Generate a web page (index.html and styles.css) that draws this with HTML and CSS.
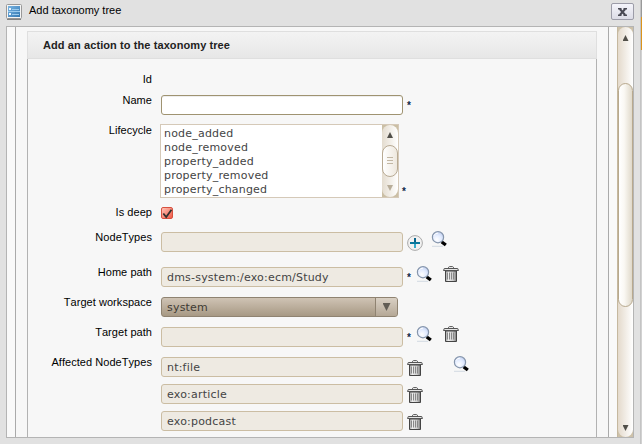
FILE: index.html
```html
<!DOCTYPE html>
<html lang="en">
<head>
<meta charset="utf-8">
<title>Add taxonomy tree</title>
<link rel="stylesheet" href="styles.css">
</head>
<body>
<svg class="defs" width="0" height="0" aria-hidden="true">
  <defs>
    <radialGradient id="lens" cx=".4" cy=".7" r=".8"><stop offset="0" stop-color="#fff"/><stop offset=".5" stop-color="#e3ecff"/><stop offset="1" stop-color="#b9c9ed"/></radialGradient>
    <linearGradient id="can" x1="0" x2="1"><stop offset="0" stop-color="#999"/><stop offset=".25" stop-color="#eee"/><stop offset=".7" stop-color="#ccc"/><stop offset="1" stop-color="#777"/></linearGradient>
    <linearGradient id="blue" x1="0" x2="1" y1="0" y2="1"><stop offset="0" stop-color="#78b4e2"/><stop offset="1" stop-color="#3478b2"/></linearGradient>
    <symbol id="search" viewBox="0 0 16 16">
      <path d="M1 15.3h11" stroke="#cdd6df" stroke-width=".9"/>
      <path d="M10 9.8l1.5 1.4" stroke="#444" stroke-width="2"/>
      <path d="M10.8 10.9l4 3.2" stroke="#000" stroke-width="3.2"/>
      <circle cx="7" cy="6.2" r="5.6" fill="url(#lens)" stroke="#8796ac" stroke-width="1.2"/>
      <path d="M2.8 4.8A4.8 4.8 0 0 1 7.2 2" fill="none" stroke="#fff"/>
    </symbol>
    <symbol id="trash" viewBox="0 0 16 16">
      <path d="M5.5 2.5V1.3L6.5 .6h3l1 .7v1.2" fill="none" stroke="#555"/>
      <path d="M2.5 5h11v10.5h-11z" fill="url(#can)" stroke="#444"/>
      <path d="M.5 4.5l.8-2h13.4l.8 2z" fill="#e5e5e5" stroke="#555"/>
      <path d="M4.5 6.5v7M6.5 6.5v7M8.5 6.5v7M10.5 6.5v7" stroke="#888"/>
    </symbol>
    <symbol id="add" viewBox="0 0 16 16">
      <circle cx="8" cy="8" r="7.4" fill="#f1f1f1" stroke="#aaa"/>
      <path d="M8 3v5" stroke="#07628a" stroke-width="2"/>
      <path d="M8 8v5" stroke="#35aac8" stroke-width="2"/>
      <path d="M3 8h10" stroke="#08779c" stroke-width="2"/>
    </symbol>
  </defs>
</svg>

<div class="window">
  <header class="titlebar">
    <svg class="window-icon" width="16" height="16" viewBox="0 0 16 16">
      <rect x=".5" y=".5" width="15" height="14" rx="1" fill="#f5f5f5" stroke="#999"/>
      <path d="M1 15.4h14" stroke="#777"/>
      <rect x="2" y="2" width="12" height="11" fill="url(#blue)"/>
      <path d="M3 4h2v2H3zM3 9h2v2H3z" fill="#e8f4ff"/>
      <path d="M6 5.5h7M6 10.5h7M2 7.5h12" stroke="#9ccbed"/>
    </svg>
    <h1>Add taxonomy tree</h1>
    <button class="close" aria-label="Close"><svg width="9" height="8" viewBox="0 0 9 8"><path d="M0 .8h3.5M5.5 .8H9M0 7.2h3.5M5.5 7.2H9" stroke="#4a4a54" stroke-width="1.4"/><path d="M1.8 1l5.4 6M7.2 1L1.8 7" stroke="#4a4a54" stroke-width="2"/></svg></button>
  </header>

  <main class="content">
    <div class="pane">
      <section class="panel">
        <h2>Add an action to the taxonomy tree</h2>
        <form class="form">
          <div class="row id-row"><label>Id</label></div>
          <div class="row name-row"><label>Name</label><div class="field"><span class="input editable"></span><span class="req">*</span></div></div>
          <div class="row life-row"><label>Lifecycle</label>
            <div class="field">
              <div class="list">
                <ul><li>node_added</li><li>node_removed</li><li>property_added</li><li>property_removed</li><li>property_changed</li></ul>
                <div class="mini-track"><div class="groove">
                  <i class="arrow up"></i><div class="mini-thumb"><i></i><i></i><i></i></div><i class="arrow down pale"></i>
                </div></div>
              </div>
              <span class="req low">*</span>
            </div>
          </div>
          <div class="row deep-row"><label>Is deep</label><div class="field"><span class="check"><svg width="11" height="11" viewBox="0 0 11 11"><path d="M1.3 5.5l2.9 3.6L9.5 1.8" fill="none" stroke="#33302f" stroke-width="1.8"/></svg></span></div></div>
          <div class="row types-row"><label>NodeTypes</label><div class="field"><span class="input"></span><svg class="icon add"><use href="#add"/></svg><svg class="icon search-a"><use href="#search"/></svg></div></div>
          <div class="row"><label>Home path</label><div class="field"><span class="input">dms-system:/exo:ecm/Study</span><span class="req">*</span><svg class="icon search-b"><use href="#search"/></svg><svg class="icon trash-b"><use href="#trash"/></svg></div></div>
          <div class="row"><label>Target workspace</label><div class="field"><div class="select"><span>system</span><b><i class="arrow down big"></i></b></div></div></div>
          <div class="row"><label>Target path</label><div class="field"><span class="input"></span><span class="req">*</span><svg class="icon search-b"><use href="#search"/></svg><svg class="icon trash-b"><use href="#trash"/></svg></div></div>
          <div class="row"><label>Affected NodeTypes</label>
            <div class="stack">
              <div class="field"><span class="input">nt:file</span><svg class="icon trash-a"><use href="#trash"/></svg><svg class="icon search-c"><use href="#search"/></svg></div>
              <div class="field"><span class="input">exo:article</span><svg class="icon trash-a"><use href="#trash"/></svg></div>
              <div class="field"><span class="input">exo:podcast</span><svg class="icon trash-a"><use href="#trash"/></svg></div>
            </div>
          </div>
        </form>
      </section>
    </div>
    <div class="track"><div class="track-groove">
      <i class="arrow up"></i><div class="thumb"></div><i class="arrow down"></i>
    </div></div>
  </main>
  <div class="edge"><span></span></div>
</div>
</body>
</html>
```

FILE: styles.css
```css
* { box-sizing: border-box; }
body { margin: 0; font: 11px/13px "Liberation Sans", Arial, sans-serif; font-kerning: none; color: #000; }
.defs { position: absolute; }
h1, h2, ul { margin: 0; padding: 0; font-size: 11px; }
ul { list-style: none; }
i { display: block; }

.window { position: relative; width: 642px; height: 444px; overflow: hidden; background: #e1e1e1; }
.titlebar { display: flex; height: 26px; padding: 3px 8px 0 6px; }
.window-icon { margin-top: 1px; }
.titlebar h1 { flex: 1; margin: 1px 0 0 7px; font-weight: normal; }
.close { display: flex; align-items: center; justify-content: center; width: 23px; height: 17px; padding: 0; border: 1px solid #9c9ca8; border-radius: 2px; background: linear-gradient(#f5f5fb, #dcdce6); }
.edge { position: absolute; top: 0; right: 0; width: 2px; height: 444px; background: #d2d2d2; border-left: 1px solid #c4c4c4; }
.edge span { display: block; width: 1px; height: 50px; background: linear-gradient(#999 17px, #dc941b 17px); }

.content { display: flex; width: 628px; height: 412px; margin-left: 6px; border: 1px solid #b4b4b4; background: #f9f9f9; }
.pane { width: 594px; height: 410px; margin-left: 8px; padding: 4px 11px 0; border: solid #aaa; border-width: 0 1px; background: #f7f7f7; overflow: hidden; }
.panel { width: 570px; height: 406px; }
.panel h2 { height: 28px; padding-left: 15px; line-height: 27px; letter-spacing: .09px; color: #222; border: 1px solid #dfdfdf; background: linear-gradient(#f3f3f3, #e7e7e7); }
.form { height: 378px; padding-top: 14px; border: solid #b2b2b2; border-width: 0 1px; }

.row { display: flex; height: 30px; }
.row label { width: 124px; margin-right: 9px; text-align: right; white-space: nowrap; letter-spacing: .05px; margin-top: -1px; }
.id-row { height: 22px; }
.name-row { height: 29px; }
.life-row { height: 82px; }
.deep-row { height: 26px; }
.id-row label, .life-row label, .deep-row label { margin-top: 0; }
.types-row { height: 35px; }
.field { display: flex; height: 20px; }
.input { width: 242px; height: 20px; padding-left: 5px; border: 1px solid #cbbda3; border-radius: 3px; background: #eeeae2; font: 11px/20px "DejaVu Sans", sans-serif; letter-spacing: .2px; color: #444; }
.editable { border-color: #9f9371; background: #fff; box-shadow: inset 0 1px #eee; }
.req { width: 5px; margin: 4px 0 0 4px; color: #102848; font-weight: bold; font-size: 10px; }
.req.low { margin: 61px 0 0 3px; }
.icon { width: 16px; height: 16px; flex: none; }
.add { margin: 3px 0 0 4px; }
.search-a { margin: -1px 0 0 8px; }
.search-b { margin: -1px 0 0 4px; }
.trash-b { margin: -1px 0 0 11px; }
.trash-a { margin: 3px 0 0 4px; }
.search-c { margin: -1px 0 0 30px; }
.stack { display: flex; flex-direction: column; gap: 7px; }

.list { display: flex; flex: none; justify-content: space-between; width: 239px; height: 74px; margin-left: -1px; border: 1px solid #d5c9b8; background: #fff; }
.list ul { padding: 2px 0 0 3px; font: 11px/14px "DejaVu Sans", sans-serif; letter-spacing: .2px; color: #444; }
.mini-track { width: 16px; background: #cbbfa5; }
.groove { height: 72px; padding-top: 7px; border-radius: 8px; background: linear-gradient(90deg, #e4dccf, #fff); }
.mini-thumb { display: flex; flex-direction: column; align-items: center; gap: 2px; width: 16px; height: 32px; margin: 7px 0 8px; padding-top: 11px; border: 1px solid #b8aa93; border-radius: 8px; background: linear-gradient(90deg, #fff, #eee8de); }
.mini-thumb i { width: 6px; height: 1px; background: #c2b7a4; }
.arrow { width: 6px; height: 6px; margin: 0 auto; background: #514f49; }
.up { clip-path: polygon(50% 0, 100% 100%, 0 100%); }
.down { clip-path: polygon(0 0, 100% 0, 50% 100%); }
.pale { background: #b8ad99; }
.check { width: 12px; height: 12px; margin-top: 1px; border: 1px solid #d7513f; border-radius: 2px; background: linear-gradient(135deg, #ffc4b7, #f15946); }
.check svg { display: block; }
.select { display: flex; width: 237px; height: 20px; border: 1px solid #8f8371; border-radius: 3px; background: linear-gradient(#cfc3b4, #a79984); overflow: hidden; font: 11px/20px "DejaVu Sans", sans-serif; letter-spacing: .2px; color: #403b34; }
.select span { flex: 1; padding-left: 5px; }
.select b { width: 22px; padding-top: 5px; border-left: 1px solid #8f8371; background: linear-gradient(#d9d0c4, #b5a896); }
.big { width: 8px; height: 8px; background: #625d55; }

.track { width: 16px; height: 410px; margin-left: 8px; background: #cdc1a9; border-left: 1px solid #c5b89f; }
.track-groove { height: 410px; padding-top: 8px; border-radius: 8px; background: linear-gradient(90deg, #e4dacc, #fff); }
.thumb { height: 224px; margin: 42px 0 118px; border: 1px solid #b8a98e; border-radius: 8px; background: linear-gradient(90deg, #fff, #faf8f3 40%, #e0d9ca); }
```
